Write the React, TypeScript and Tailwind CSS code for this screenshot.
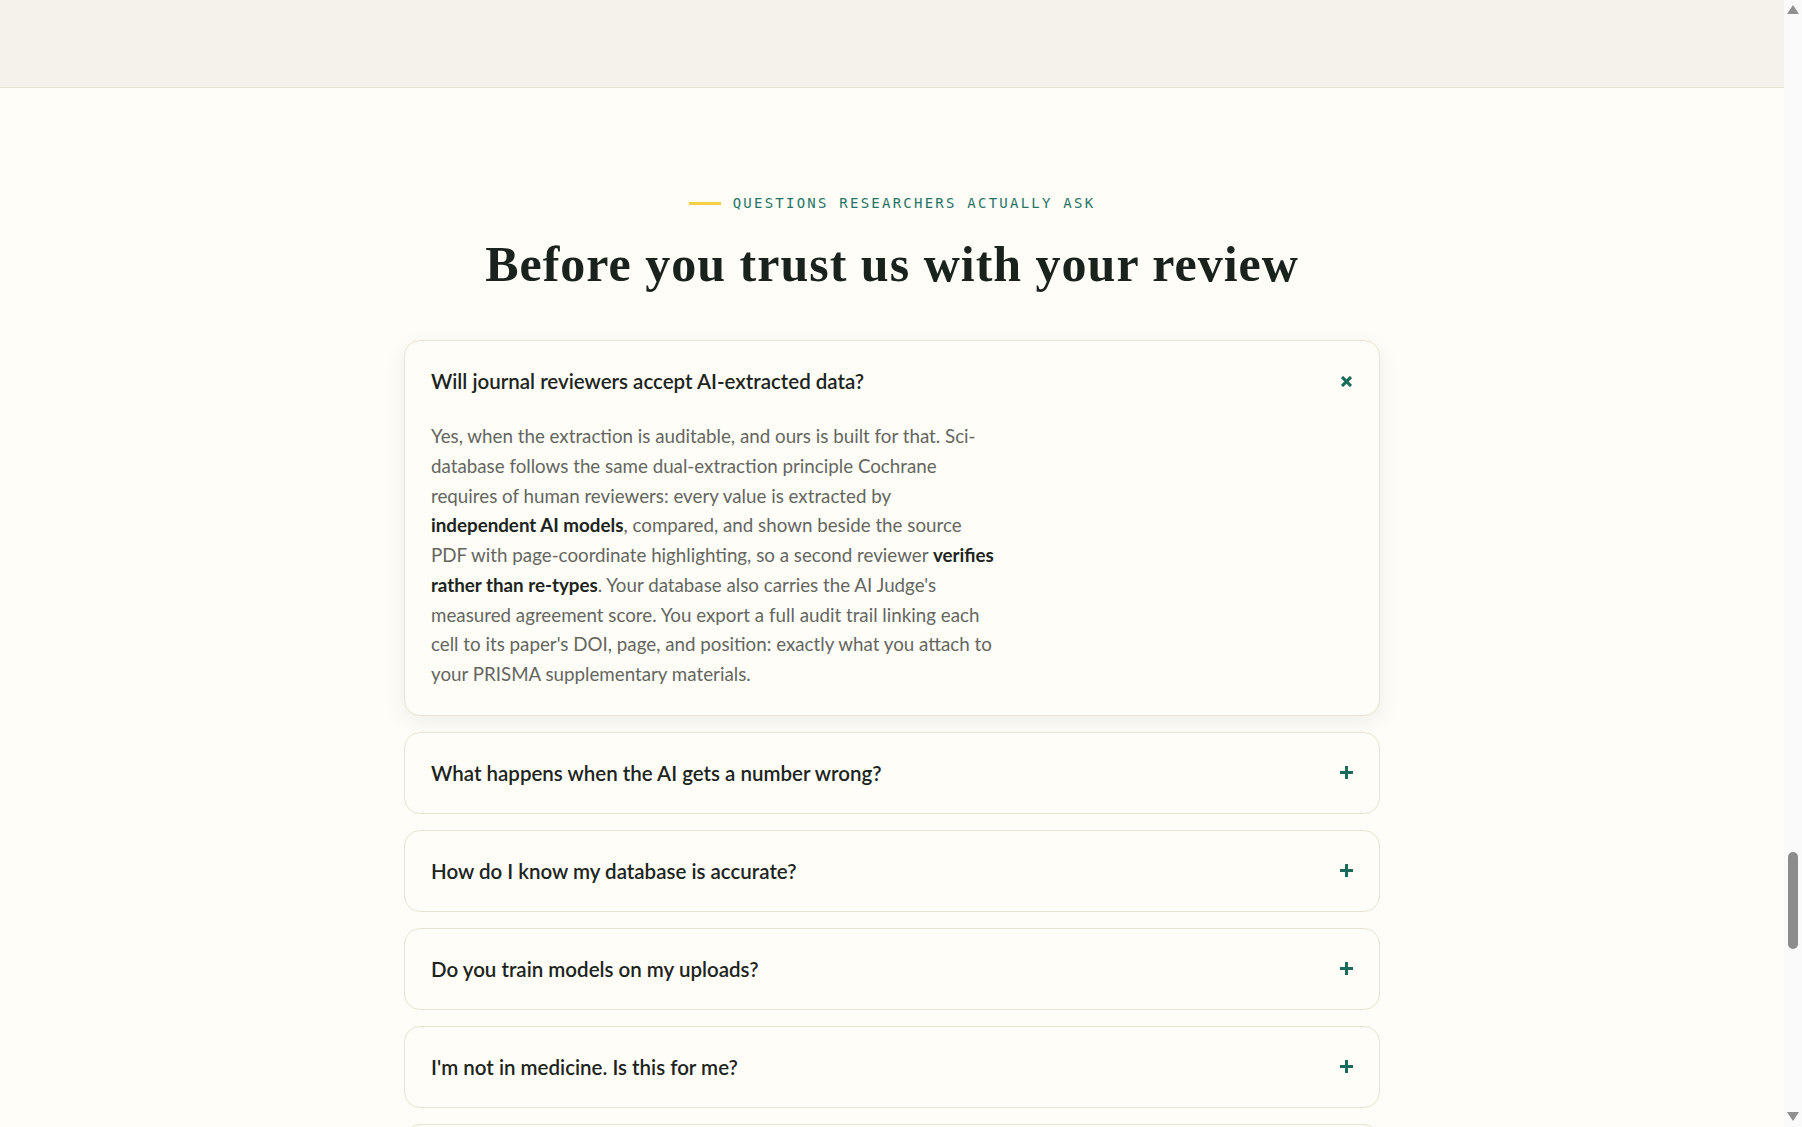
import React from "react";

const PlusIcon = ({ open }: { open?: boolean }) => (
  <svg
    width="13"
    height="13"
    viewBox="0 0 13 13"
    className={open ? "rotate-45 shrink-0" : "shrink-0"}
    aria-hidden
  >
    <rect x="5" y="0" width="3" height="13" fill="#1a6b5c" />
    <rect x="0" y="5" width="13" height="3" fill="#1a6b5c" />
  </svg>
);

const questions = [
  "What happens when the AI gets a number wrong?",
  "How do I know my database is accurate?",
  "Do you train models on my uploads?",
  "I'm not in medicine. Is this for me?",
  "How much does a review cost?",
];

const Scrollbar = () => (
  <div className="w-[18px] shrink-0 bg-[#fafafa] flex flex-col items-center">
    <svg width="12" height="9" viewBox="0 0 12 9" className="mt-[5px] shrink-0" aria-hidden>
      <polygon points="6,0 12,9 0,9" fill="#8f8f8f" />
    </svg>
    <div className="mt-[838px] w-[10px] h-[97px] rounded-full bg-[#8c8c8c] shrink-0" />
    <div className="flex-1" />
    <svg width="12" height="9" viewBox="0 0 12 9" className="mb-[6px] shrink-0" aria-hidden>
      <polygon points="0,0 12,0 6,9" fill="#8f8f8f" />
    </svg>
  </div>
);

export default function App() {
  return (
    <div className="h-screen flex overflow-hidden bg-[#fefdf8]">
      <div
        className="flex-1 min-w-0 overflow-hidden text-[#1c2420]"
        style={{ fontFamily: "Lato, 'Noto Sans', sans-serif" }}
      >
        <div className="h-[88px] bg-[#f5f2eb] border-b border-[#e3dfd1]" />

        <section className="pt-[105px] pb-24">
          <div className="flex items-center justify-center gap-3 h-5">
            <span className="block w-8 h-[3px] bg-[#f5cf47]" />
            <span
              className="text-[14px] leading-5 tracking-[0.16em] text-[#257365] uppercase"
              style={{ fontFamily: "'DejaVu Sans Mono', 'Liberation Mono', monospace" }}
            >
              Questions researchers actually ask
            </span>
          </div>

          <h2
            className="mt-[21px] text-center text-[50px] leading-[60px] font-bold tracking-[1px] text-[#1a221e]"
            style={{ fontFamily: "'Liberation Serif', 'DejaVu Serif', serif" }}
          >
            Before you trust us with your review
          </h2>

          <div className="mx-auto mt-[46px] max-w-5xl px-6 flex flex-col gap-4">
            <div className="rounded-2xl border border-[#e9e3d1] bg-[#fefdf8] shadow-[0_6px_22px_rgba(60,50,20,0.08)]">
              <div className="flex items-center justify-between p-[26px]">
                <span className="text-[20.5px] leading-7 font-semibold text-[#1c2420]">
                  Will journal reviewers accept AI-extracted data?
                </span>
                <PlusIcon open />
              </div>
              <div className="px-[26px] pb-[26px]">
                <p className="max-w-[700px] text-[18.75px] leading-[29.75px] text-[#64665f]">
                  Yes, when the extraction is auditable, and ours is built for that. Sci-
                  <br />
                  database follows the same dual-extraction principle Cochrane
                  <br />
                  requires of human reviewers: every value is extracted by
                  <br />
                  <strong className="font-bold text-[#1c2420]">independent AI models</strong>, compared, and shown beside the source
                  <br />
                  PDF with page-coordinate highlighting, so a second reviewer{" "}
                  <strong className="font-bold text-[#1c2420]">verifies</strong>
                  <br />
                  <strong className="font-bold text-[#1c2420]">rather than re-types</strong>. Your database also carries the AI Judge's
                  <br />
                  measured agreement score. You export a full audit trail linking each
                  <br />
                  cell to its paper's DOI, page, and position: exactly what you attach to
                  <br />
                  your PRISMA supplementary materials.
                </p>
              </div>
            </div>

            {questions.map((q) => (
              <div key={q} className="rounded-2xl border border-[#e9e3d1] bg-[#fefdf8]">
                <div className="flex items-center justify-between p-[26px]">
                  <span className="text-[20.5px] leading-7 font-semibold text-[#1c2420]">{q}</span>
                  <PlusIcon />
                </div>
              </div>
            ))}
          </div>
        </section>
      </div>
      <Scrollbar />
    </div>
  );
}
